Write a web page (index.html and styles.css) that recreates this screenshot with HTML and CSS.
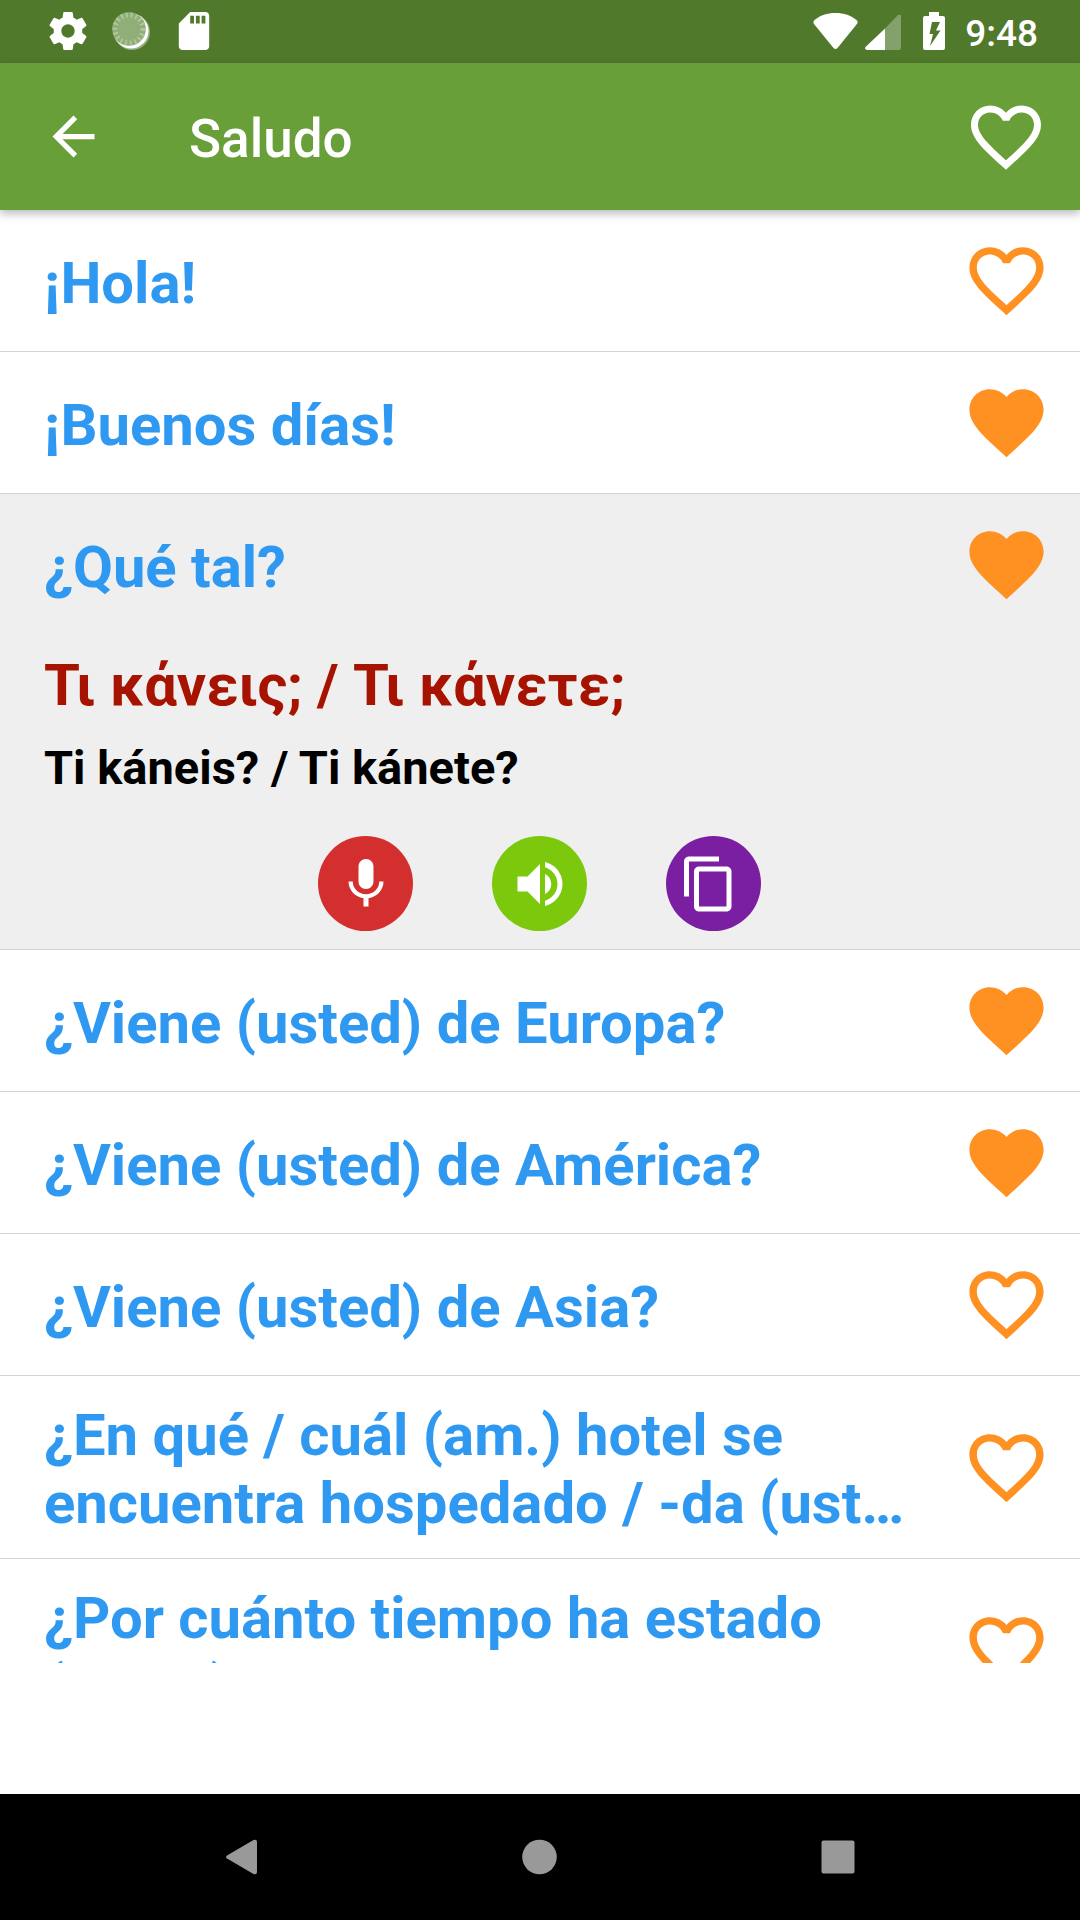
FILE: index.html
```html
<!DOCTYPE html>
<html lang="es">
<head>
<meta charset="utf-8">
<meta name="viewport" content="width=device-width, initial-scale=1">
<title>Saludo</title>
<link rel="stylesheet" href="styles.css">
</head>
<body>
<svg class="sprite" aria-hidden="true">
  <symbol id="heart" viewBox="0 0 24 24"><path d="M12 21.35l-1.45-1.32C5.4 15.36 2 12.28 2 8.5 2 5.42 4.42 3 7.5 3c1.74 0 3.41.81 4.5 2.09C13.09 3.81 14.76 3 16.5 3 19.58 3 22 5.42 22 8.5c0 3.78-3.4 6.86-8.55 11.54L12 21.35z"/></symbol>
  <symbol id="heart-outline" viewBox="0 0 24 24"><path d="M16.5 3c-1.74 0-3.41.81-4.5 2.09C10.91 3.81 9.24 3 7.5 3 4.42 3 2 5.42 2 8.5c0 3.78 3.4 6.86 8.55 11.54L12 21.35l1.45-1.32C18.6 15.36 22 12.28 22 8.5 22 5.42 19.58 3 16.5 3zm-4.4 15.55l-.1.1-.1-.1C7.14 14.24 4 11.39 4 8.5 4 6.5 5.5 5 7.5 5c1.54 0 3.04.99 3.57 2.36h1.87C13.46 5.99 14.96 5 16.5 5c2 0 3.5 1.5 3.5 3.5 0 2.89-3.14 5.74-7.9 10.05z"/></symbol>
</svg>

<div class="status-bar">
  <div class="status-group status-left">
    <svg class="status-icon" viewBox="2 2 20 20"><path d="M19.43 12.98c.04-.32.07-.64.07-.98s-.03-.66-.07-.98l2.11-1.65c.19-.15.24-.42.12-.64l-2-3.46c-.12-.22-.39-.3-.61-.22l-2.49 1c-.52-.4-1.08-.73-1.69-.98l-.38-2.65C14.46 2.18 14.25 2 14 2h-4c-.25 0-.46.18-.49.42l-.38 2.65c-.61.25-1.17.59-1.69.98l-2.49-1c-.23-.09-.49 0-.61.22l-2 3.46c-.13.22-.07.49.12.64l2.11 1.65c-.04.32-.07.65-.07.98s.03.66.07.98l-2.11 1.65c-.19.15-.24.42-.12.64l2 3.46c.12.22.39.3.61.22l2.49-1c.52.4 1.08.73 1.69.98l.38 2.65c.03.24.24.42.49.42h4c.25 0 .46-.18.49-.42l.38-2.65c.61-.25 1.17-.59 1.69-.98l2.49 1c.23.09.49 0 .61-.22l2-3.46c.12-.22.07-.49-.12-.64l-2.11-1.65zM12 15.500c-1.930 0-3.500-1.570-3.500-3.500s1.570-3.500 3.500-3.500 3.500 1.570 3.500 3.500-1.570 3.500-3.500 3.500z"/></svg>
    <svg class="status-icon" viewBox="0 0 38 38">
      <circle cx="20" cy="20" r="18" opacity=".4"/>
      <circle cx="19" cy="19" r="17.500"/>
      <circle cx="17" cy="17" r="16.800" fill="#8fae78"/>
      <circle cx="17" cy="17" r="14" fill="none" stroke="#b4c79c" stroke-width="5" stroke-dasharray="1.800 3"/>
    </svg>
    <svg class="status-icon" viewBox="2 2 20 20"><path d="M18 2h-8L4 8v12c0 1.100.9 2 2 2h12c1.100 0 2-.9 2-2V4c0-1.100-.9-2-2-2zm-6 6h-2V4h2v4zm3 0h-2V4h2v4zm3 0h-2V4h2v4z"/></svg>
  </div>
  <div class="status-group status-right">
    <svg class="wifi-icon" viewBox="0 0 45 38"><path d="M1.500 8C7 3.500 14 1 22.500 1S38 3.500 43.500 8q2 2 .4 4L24.500 36q-2 2-4 0L1 12q-1.500-2 .5-4z"/></svg>
    <svg class="signal-icon" viewBox="0 0 36 38"><path opacity=".3" d="M20 16.500L33 3q3-1.500 3 1v31q0 3-2 3H20z"/><path d="M20 16.500V38H2q-3-1-1.500-3z"/></svg>
    <svg class="battery-icon" viewBox="0 0 22 38"><path fill-rule="evenodd" d="M6 0h10v4h4q2 0 2 2v30q0 2-2 2H2q-2 0-2-2V6q0-2 2-2h4zM9 10L6.500 22H10l-3 12 10.500-15.500H13L17 10z"/></svg>
    <time class="clock">9:48</time>
  </div>
</div>

<header class="toolbar">
  <button class="icon-button" aria-label="Atrás"><svg class="back-icon" viewBox="0 0 24 24"><path d="M20 11H7.830l5.590-5.590L12 4l-8 8 8 8 1.410-1.410L7.830 13H20v-2z"/></svg></button>
  <h1 class="toolbar-title">Saludo</h1>
  <button class="icon-button" aria-label="Favoritos"><svg class="toolbar-heart"><use href="#heart-outline"/></svg></button>
</header>

<main class="phrases">
  <ul class="phrase-list">
    <li class="phrase">
      <div class="phrase-row">
        <button class="phrase-text"><span class="phrase-label">¡Hola!</span></button>
        <button class="icon-button" aria-label="Añadir a favoritos"><svg class="heart"><use href="#heart-outline"/></svg></button>
      </div>
    </li>
    <li class="phrase">
      <div class="phrase-row">
        <button class="phrase-text"><span class="phrase-label">¡Buenos días!</span></button>
        <button class="icon-button" aria-label="Quitar de favoritos"><svg class="heart"><use href="#heart"/></svg></button>
      </div>
    </li>
    <li class="phrase phrase-open">
      <div class="phrase-row">
        <button class="phrase-text" aria-expanded="true"><span class="phrase-label">¿Qué tal?</span></button>
        <button class="icon-button" aria-label="Quitar de favoritos"><svg class="heart"><use href="#heart"/></svg></button>
      </div>
      <div class="details">
        <p class="translation" lang="el">Τι κάνεις; / Τι κάνετε;</p>
        <p class="transliteration">Ti káneis? / Ti kánete?</p>
        <div class="actions">
          <button class="action action-record" aria-label="Grabar"><svg class="action-icon" viewBox="0 0 24 24"><path d="M12 14c1.660 0 2.990-1.340 2.990-3L15 5c0-1.660-1.340-3-3-3S9 3.340 9 5v6c0 1.660 1.340 3 3 3zm5.300-3c0 3-2.540 5.100-5.300 5.100S6.700 14 6.700 11H5c0 3.410 2.720 6.230 6 6.720V21h2v-3.280c3.280-.48 6-3.300 6-6.720h-1.700z"/></svg></button>
          <button class="action action-listen" aria-label="Escuchar"><svg class="action-icon" viewBox="0 0 24 24"><path d="M3 9v6h4l5 5V4L7 9H3zm13.500 3c0-1.770-1.020-3.290-2.500-4.030v8.050c1.480-.73 2.500-2.250 2.500-4.020zM14 3.230v2.060c2.890.86 5 3.540 5 6.710s-2.110 5.850-5 6.710v2.060c4.010-.91 7-4.490 7-8.770s-2.990-7.860-7-8.770z"/></svg></button>
          <button class="action action-copy" aria-label="Copiar"><svg class="action-icon" viewBox="2 0 24 24"><path d="M16 1H4c-1.100 0-2 .9-2 2v14h2V3h12V1zm3 4H8c-1.100 0-2 .9-2 2v14c0 1.100.9 2 2 2h11c1.100 0 2-.9 2-2V7c0-1.100-.9-2-2-2zm0 16H8V7h11v14z"/></svg></button>
        </div>
      </div>
    </li>
    <li class="phrase">
      <div class="phrase-row">
        <button class="phrase-text"><span class="phrase-label">¿Viene (usted) de Europa?</span></button>
        <button class="icon-button" aria-label="Quitar de favoritos"><svg class="heart"><use href="#heart"/></svg></button>
      </div>
    </li>
    <li class="phrase">
      <div class="phrase-row">
        <button class="phrase-text"><span class="phrase-label">¿Viene (usted) de América?</span></button>
        <button class="icon-button" aria-label="Quitar de favoritos"><svg class="heart"><use href="#heart"/></svg></button>
      </div>
    </li>
    <li class="phrase">
      <div class="phrase-row">
        <button class="phrase-text"><span class="phrase-label">¿Viene (usted) de Asia?</span></button>
        <button class="icon-button" aria-label="Añadir a favoritos"><svg class="heart"><use href="#heart-outline"/></svg></button>
      </div>
    </li>
    <li class="phrase">
      <div class="phrase-row">
        <button class="phrase-text"><span class="phrase-label">¿En qué / cuál (am.) hotel se encuentra hospedado / -da (ust…</span></button>
        <button class="icon-button" aria-label="Añadir a favoritos"><svg class="heart"><use href="#heart-outline"/></svg></button>
      </div>
    </li>
    <li class="phrase">
      <div class="phrase-row">
        <button class="phrase-text"><span class="phrase-label">¿Por cuánto tiempo ha estado (usted) aquí?</span></button>
        <button class="icon-button" aria-label="Añadir a favoritos"><svg class="heart"><use href="#heart-outline"/></svg></button>
      </div>
    </li>
  </ul>
</main>

<nav class="system-nav" aria-label="Sistema">
  <button class="icon-button" aria-label="Volver"><svg class="nav-icon" viewBox="0 0 48 48"><path d="M9 22.500L35.500 7q3.500-1 3.500 2v30q0 3-3.500 2L9 25.500q-2-1.500 0-3z"/></svg></button>
  <button class="icon-button" aria-label="Inicio"><svg class="nav-icon" viewBox="0 0 48 48"><circle cx="23.500" cy="24" r="17.300"/></svg></button>
  <button class="icon-button" aria-label="Recientes"><svg class="nav-icon" viewBox="0 0 48 48"><rect x="7.500" y="7.500" width="33" height="33" rx="2"/></svg></button>
</nav>
</body>
</html>
```
FILE: styles.css
```css
* {
  box-sizing: border-box;
}

body {
  margin: 0;
  height: 100vh;
  display: flex;
  flex-direction: column;
  background: #fff;
  font-family: Roboto, sans-serif;
}

.sprite {
  display: none;
}

svg {
  display: block;
  fill: currentColor;
}

button {
  margin: 0;
  padding: 0;
  border: 0;
  background: none;
  color: inherit;
  font: inherit;
  text-align: left;
  cursor: pointer;
}

.icon-button {
  display: flex;
  flex: none;
  align-items: center;
  justify-content: center;
}

/* Status bar */

.status-bar {
  flex: none;
  display: flex;
  justify-content: space-between;
  height: 63px;
  padding: 0 42px 1px 49px;
  background: #50792c;
  color: #fff;
}

.status-group {
  display: flex;
  align-items: center;
}

.status-left {
  gap: 25px;
}

.status-icon {
  width: 38px;
  height: 38px;
}

.wifi-icon {
  width: 45px;
  height: 38px;
  margin-right: 7px;
}

.signal-icon {
  width: 36px;
  height: 38px;
  margin-right: 22px;
}

.battery-icon {
  width: 22px;
  height: 38px;
  margin-right: 20px;
}

.clock {
  padding-top: 6px;
  font-size: 37px;
  font-weight: 500;
  line-height: 44px;
}

/* Toolbar */

.toolbar {
  position: relative;
  z-index: 1;
  flex: none;
  display: flex;
  align-items: center;
  height: 147px;
  padding: 0 32px 0 42px;
  background: #689f38;
  color: #fff;
  box-shadow: 0 4px 8px rgba(0, 0, 0, 0.26);
}

.back-icon {
  width: 63px;
  height: 63px;
}

.toolbar-title {
  flex: 1;
  margin: 0 0 0 84px;
  padding-top: 4px;
  font-size: 53px;
  font-weight: 500;
  line-height: 62px;
}

.toolbar-heart {
  width: 84px;
  height: 84px;
}

.phrases {
  flex: 1;
  min-height: 0;
  margin-bottom: 131px;
  overflow: hidden;
}

.phrase-list {
  margin: 0;
  padding: 0;
  list-style: none;
}

.phrase {
  border-bottom: 1px solid #d3d3d3;
}

.phrase-open {
  background: #efefef;
}

.phrase-row {
  display: flex;
  align-items: center;
  min-height: 141px;
  padding: 0 29px 0 44px;
}

.phrase-text {
  flex: 1;
  padding: 25px 0 21px;
  color: #2f99f2;
  font-size: 58px;
  font-weight: 700;
  line-height: 68px;
}

.phrase-label {
  display: -webkit-box;
  -webkit-box-orient: vertical;
  -webkit-line-clamp: 2;
  overflow: hidden;
}

.heart {
  width: 89px;
  height: 89px;
  color: #ff9122;
}

/* Expanded phrase */

.details {
  padding: 16px 45px 18px 44px;
  font-weight: 700;
}

.translation {
  margin: 0;
  color: #a61300;
  font-size: 58px;
  line-height: 68px;
}

.transliteration {
  margin: 21px 0 0;
  color: #000;
  font-size: 47px;
  line-height: 56px;
}

.actions {
  display: flex;
  justify-content: center;
  gap: 79px;
  margin-top: 40px;
}

.action {
  display: flex;
  align-items: center;
  justify-content: center;
  width: 95px;
  height: 95px;
  border-radius: 50%;
  color: #fff;
}

.action-record {
  background: #d42f2f;
}

.action-listen {
  background: #7cc80c;
}

.action-copy {
  background: #7b1fa2;
}

.action-icon {
  width: 60px;
  height: 60px;
}

/* System navigation */

.system-nav {
  flex: none;
  display: grid;
  grid-template-columns: repeat(3, 1fr);
  height: 126px;
  padding: 0 93px;
  background: #000;
  color: #999;
}

.nav-icon {
  width: 48px;
  height: 48px;
}
```
